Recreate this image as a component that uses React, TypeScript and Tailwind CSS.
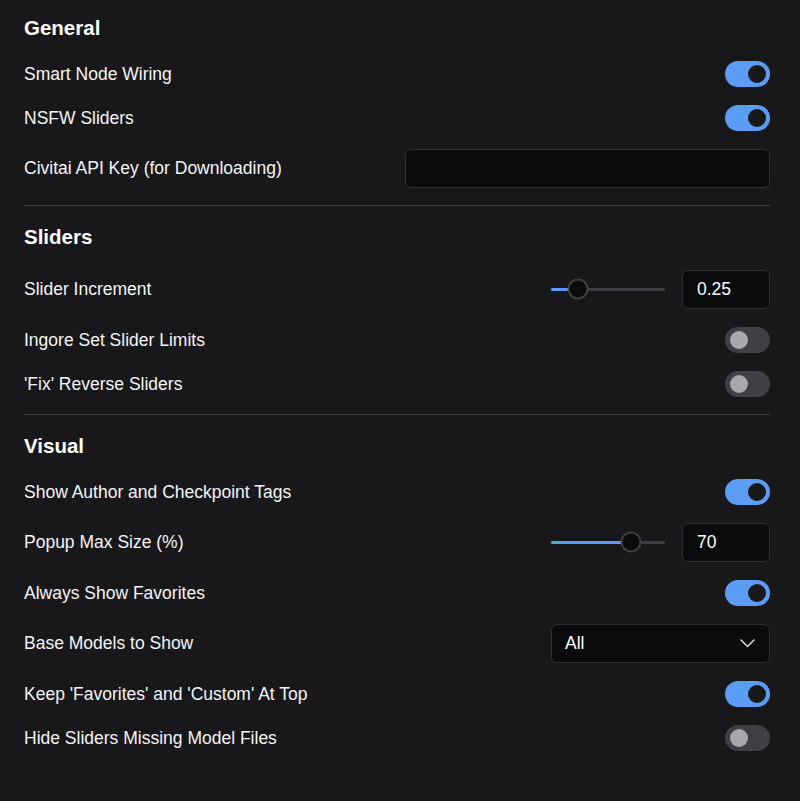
type Row =
  | { kind: 'toggle'; label: string; on: boolean }
  | { kind: 'text'; label: string }
  | { kind: 'slider'; label: string; value: string; pct: number }
  | { kind: 'select'; label: string; value: string };

const sections: { title: string; rows: Row[] }[] = [
  {
    title: 'General',
    rows: [
      { kind: 'toggle', label: 'Smart Node Wiring', on: true },
      { kind: 'toggle', label: 'NSFW Sliders', on: true },
      { kind: 'text', label: 'Civitai API Key (for Downloading)' },
    ],
  },
  {
    title: 'Sliders',
    rows: [
      { kind: 'slider', label: 'Slider Increment', value: '0.25', pct: 24 },
      { kind: 'toggle', label: 'Ingore Set Slider Limits', on: false },
      { kind: 'toggle', label: "'Fix' Reverse Sliders", on: false },
    ],
  },
  {
    title: 'Visual',
    rows: [
      { kind: 'toggle', label: 'Show Author and Checkpoint Tags', on: true },
      { kind: 'slider', label: 'Popup Max Size (%)', value: '70', pct: 70 },
      { kind: 'toggle', label: 'Always Show Favorites', on: true },
      { kind: 'select', label: 'Base Models to Show', value: 'All' },
      { kind: 'toggle', label: "Keep 'Favorites' and 'Custom' At Top", on: true },
      { kind: 'toggle', label: 'Hide Sliders Missing Model Files', on: false },
    ],
  },
];

function Toggle({ on }: { on: boolean }) {
  return (
    <div
      className={`w-[45px] h-[26px] rounded-full flex items-center ${
        on ? 'bg-[#5b9cf5] justify-end pr-[4px]' : 'bg-[#3f3f46] justify-start pl-[5px]'
      }`}
    >
      <div className={`w-[18px] h-[18px] rounded-full ${on ? 'bg-[#18181b]' : 'bg-[#a8a8b0]'}`} />
    </div>
  );
}

function Slider({ value, pct }: { value: string; pct: number }) {
  return (
    <div className="flex items-center gap-[17px]">
      <div className="relative w-[114px] h-[3px] rounded-full bg-[#3f3f46]">
        <div className="absolute left-0 top-0 h-full rounded-full bg-[#5b9cf5]" style={{ width: `${pct}%` }} />
        <div
          className="absolute top-1/2 w-[21px] h-[21px] -translate-x-1/2 -translate-y-1/2 rounded-full bg-[#0b0b0d] border-2 border-[#3f3f46]"
          style={{ left: `${pct}%` }}
        />
      </div>
      <div className="w-[88px] h-[39px] rounded-md border border-[#2f2f35] bg-[#0b0b0d] flex items-center px-[14px] text-[17.5px] text-white">
        {value}
      </div>
    </div>
  );
}

function Control({ row }: { row: Row }) {
  if (row.kind === 'toggle') return <Toggle on={row.on} />;
  if (row.kind === 'slider') return <Slider value={row.value} pct={row.pct} />;
  if (row.kind === 'text')
    return <div className="w-[365px] h-[39px] rounded-md border border-[#2f2f35] bg-[#0b0b0d]" />;
  return (
    <div className="w-[219px] h-[39px] rounded-md border border-[#2f2f35] bg-[#0b0b0d] flex items-center justify-between pl-[13px] pr-[14px] text-[17.5px] text-white">
      <span>{row.value}</span>
      <svg width="15" height="9" viewBox="0 0 15 9" fill="none" className="text-[#d4d4d8]">
        <path d="M1 1l6.5 6.5L14 1" stroke="currentColor" strokeWidth="1.6" strokeLinecap="round" strokeLinejoin="round" />
      </svg>
    </div>
  );
}

export default function App() {
  return (
    <div
      className="min-h-screen bg-[#18181b] text-[#f4f4f5] pl-6 pr-[30px] pt-[13.5px]"
      style={{ fontFamily: '"Liberation Sans", Arial, sans-serif' }}
    >
      {sections.map((s, i) => (
        <div key={s.title} className={i > 0 ? 'border-t border-[#3a3a40] pt-[17px]' : ''}>
          <h2 className="text-[20.5px] leading-[28px] font-bold text-white">{s.title}</h2>
          <div className="flex flex-col gap-[18px] pt-[19px] pb-[17px]">
            {s.rows.map((r) => (
              <div key={r.label} className="flex items-center justify-between">
                <span className="text-[17.5px] leading-[22px]">{r.label}</span>
                <Control row={r} />
              </div>
            ))}
          </div>
        </div>
      ))}
    </div>
  );
}
